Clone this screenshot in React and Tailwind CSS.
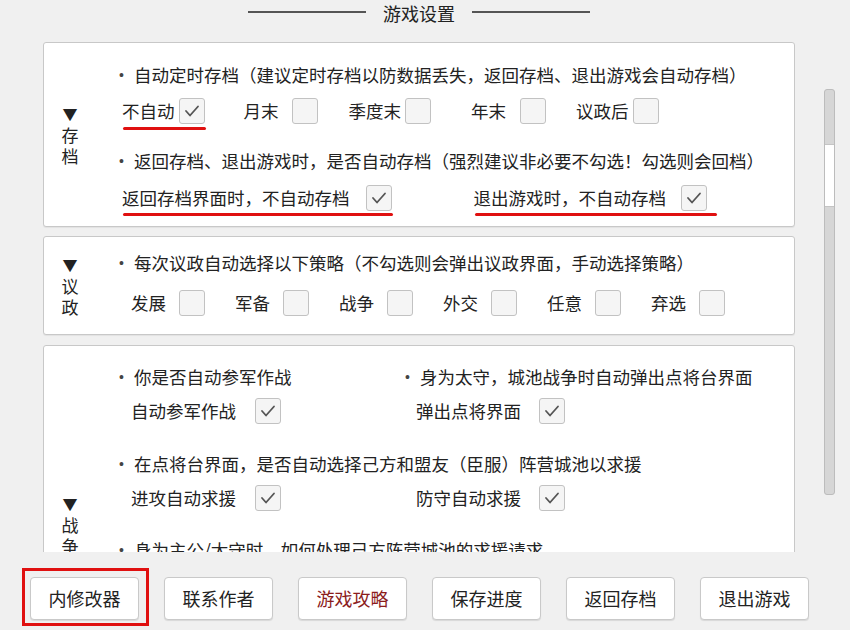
const font = { fontFamily: '"Noto Sans CJK SC", "Noto Sans", sans-serif' };

const Check = ({ on = true }) => (
  <span className="flex h-[26px] w-[26px] shrink-0 items-center justify-center rounded-[3px] border border-[#c2c2c2] bg-[#f5f5f5]">
    {on && (
      <svg width="16" height="14" viewBox="0 0 16 14">
        <polyline points="2,7 6,11.5 14,2.5" fill="none" stroke="#555" strokeWidth="1.8" strokeLinecap="round" strokeLinejoin="round" />
      </svg>
    )}
  </span>
);

const Bullet = ({ children }) => (
  <div className="flex h-[24px] items-center leading-[24px]">
    <span className="w-[15px] font-['Liberation_Sans',sans-serif] text-[14px] leading-[24px] text-[#444]">•</span>
    <span>{children}</span>
  </div>
);

const Label = ({ chars }) => (
  <div className="flex w-[52px] shrink-0 flex-col items-center justify-center text-[17px] leading-[21px]">
    <span className="text-[15px]">▼</span>
    {chars.map((c) => (
      <span key={c}>{c}</span>
    ))}
  </div>
);

const Underline = ({ w, top }) => (
  <span
    className={`absolute left-[1px] h-[3px] rounded-full bg-[#e01010] ${w} ${top}`}
  />
);

const Item = ({ text, gap, ml, on, children }) => (
  <div className={`relative flex items-center ${ml}`}>
    <span className="leading-[26px]">{text}</span>
    <span className={gap}>
      <Check on={on} />
    </span>
    {children}
  </div>
);

export default function App() {
  return (
    <div
      style={font}
      className="flex h-[630px] w-[850px] flex-col overflow-hidden bg-[#f0f0f0] text-[17.5px] text-[#222]"
    >
      <div className="ml-[43px] flex h-[42px] w-[752px] items-start justify-center">
        <div className="flex h-[26px] items-center">
          <span className="mt-[-2px] h-[2px] w-[118px] bg-[#555]" />
          <span className="mx-[17px] text-[18px] leading-[26px]">游戏设置</span>
          <span className="mt-[-2px] h-[2px] w-[118px] bg-[#555]" />
        </div>
      </div>

      <div className="flex h-[510px]">
        <div className="ml-[43px] flex w-[752px] flex-col overflow-hidden">
          {/* 存档 */}
          <div className="flex h-[185px] shrink-0 rounded-[3px] border border-[#c8c8c8] bg-white shadow-[0_1px_1px_rgba(0,0,0,0.06)]">
            <Label chars={["存", "档"]} />
            <div className="ml-[23px] flex flex-col pt-[20px]">
              <Bullet>自动定时存档（建议定时存档以防数据丢失，返回存档、退出游戏会自动存档）</Bullet>
              <div className="mt-[11px] flex pl-[3px]">
                <Item text="不自动" gap="ml-[4px]" ml="">
                  <Underline w="w-[83px]" top="top-[29px]" />
                </Item>
                <Item text="月末" gap="ml-[13px]" ml="ml-[39px]" on={false} />
                <Item text="季度末" gap="ml-[4px]" ml="ml-[31px]" on={false} />
                <Item text="年末" gap="ml-[14px]" ml="ml-[40px]" on={false} />
                <Item text="议政后" gap="ml-[4px]" ml="ml-[30px]" on={false} />
              </div>
              <div className="mt-[25px]">
                <Bullet>返回存档、退出游戏时，是否自动存档（强烈建议非必要不勾选！勾选则会回档）</Bullet>
              </div>
              <div className="mt-[12px] flex pl-[3px]">
                <Item text="返回存档界面时，不自动存档" gap="ml-[16px]" ml="">
                  <Underline w="w-[270px]" top="top-[28px]" />
                </Item>
                <Item text="退出游戏时，不自动存档" gap="ml-[15px]" ml="ml-[82px]">
                  <Underline w="w-[242px]" top="top-[28px]" />
                </Item>
              </div>
            </div>
          </div>

          {/* 议政 */}
          <div className="mt-[9px] flex h-[99px] shrink-0 rounded-[3px] border border-[#c8c8c8] bg-white shadow-[0_1px_1px_rgba(0,0,0,0.06)]">
            <Label chars={["议", "政"]} />
            <div className="ml-[23px] flex flex-col pt-[14px]">
              <Bullet>每次议政自动选择以下策略（不勾选则会弹出议政界面，手动选择策略）</Bullet>
              <div className="mt-[15px] flex pl-[12px]">
                {["发展", "军备", "战争", "外交", "任意", "弃选"].map((t) => (
                  <div key={t} className="flex w-[104px] items-center">
                    <span className="leading-[26px]">{t}</span>
                    <span className="ml-[13px]">
                      <Check on={false} />
                    </span>
                  </div>
                ))}
              </div>
            </div>
          </div>

          {/* 战争 */}
          <div className="mt-[10px] flex h-[358px] shrink-0 rounded-[3px] border border-[#c8c8c8] bg-white shadow-[0_1px_1px_rgba(0,0,0,0.06)]">
            <Label chars={["战", "争"]} />
            <div className="ml-[23px] flex flex-col pt-[19px]">
              <div className="grid grid-cols-[286px_1fr]">
                <Bullet>你是否自动参军作战</Bullet>
                <Bullet>身为太守，城池战争时自动弹出点将台界面</Bullet>
              </div>
              <div className="mt-[9px] grid grid-cols-[286px_1fr]">
                <div className="flex pl-[12px]">
                  <Item text="自动参军作战" gap="ml-[19px]" ml="" />
                </div>
                <div className="flex pl-[11px]">
                  <Item text="弹出点将界面" gap="ml-[18px]" ml="" />
                </div>
              </div>
              <div className="mt-[28px]">
                <Bullet>在点将台界面，是否自动选择己方和盟友（臣服）阵营城池以求援</Bullet>
              </div>
              <div className="mt-[9px] grid grid-cols-[286px_1fr]">
                <div className="flex pl-[12px]">
                  <Item text="进攻自动求援" gap="ml-[19px]" ml="" />
                </div>
                <div className="flex pl-[11px]">
                  <Item text="防守自动求援" gap="ml-[18px]" ml="" />
                </div>
              </div>
              <div className="mt-[27px]">
                <Bullet>身为主公/太守时，如何处理己方阵营城池的求援请求</Bullet>
              </div>
            </div>
          </div>
        </div>

        <div className="ml-[29px] mt-[47px] flex h-[406px] w-[11px] flex-col overflow-hidden rounded-[3px] border border-[#bcbcbc] bg-[#d6d6d6]">
          <div className="h-[54px] shrink-0" />
          <div className="h-[63px] shrink-0 border-y border-[#c4c4c4] bg-white" />
        </div>
      </div>

      <div className="flex gap-[25px] pl-[30px] pt-[25px]">
        {["内修改器", "联系作者", "游戏攻略", "保存进度", "返回存档", "退出游戏"].map((t, i) => (
          <button
            key={t}
            className={`relative flex h-[43px] w-[109px] items-center justify-center rounded-[4px] border border-[#c9c9c9] bg-white text-[18px] shadow-[0_1px_1px_rgba(0,0,0,0.1)] ${
              i === 2 ? "text-[#8c1c1c]" : "text-[#222]"
            }`}
          >
            {t}
            {i === 0 && (
              <span className="absolute -bottom-[7px] -left-[9px] -right-[11px] -top-[10px] border-[3px] border-[#e01010]" />
            )}
          </button>
        ))}
      </div>
    </div>
  );
}
